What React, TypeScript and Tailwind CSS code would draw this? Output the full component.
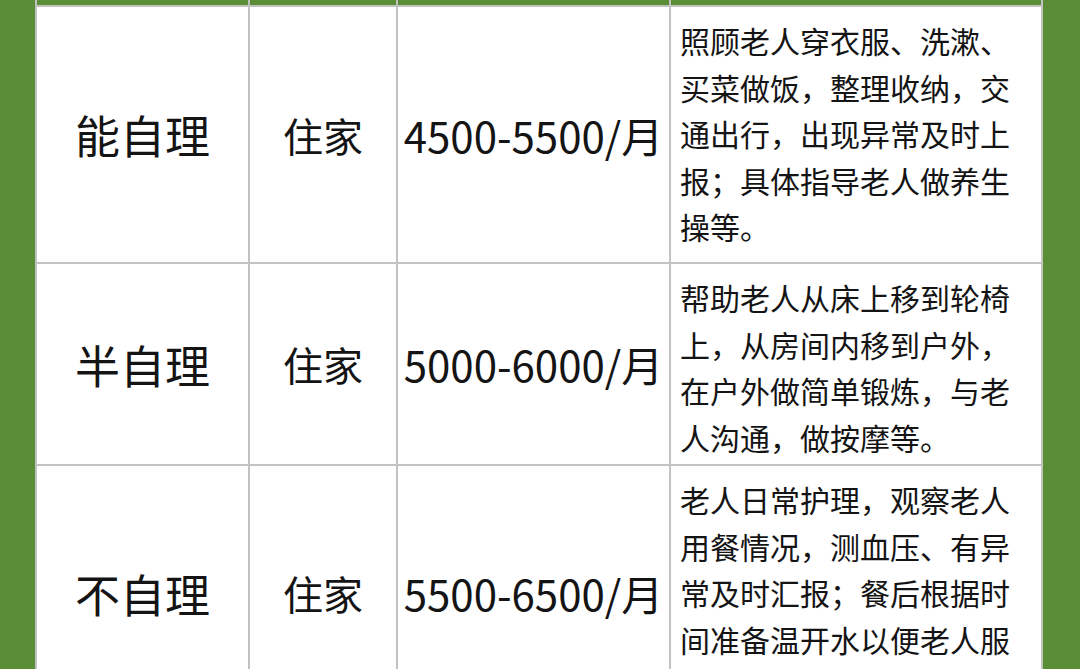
const rows = [
  {
    level: "能自理",
    place: "住家",
    price: "4500-5500/月",
    h: "h-[255px]",
    lines: [
      "照顾老人穿衣服、洗漱、",
      "买菜做饭，整理收纳，交",
      "通出行，出现异常及时上",
      "报；具体指导老人做养生",
      "操等。",
    ],
  },
  {
    level: "半自理",
    place: "住家",
    price: "5000-6000/月",
    h: "h-[200px]",
    lines: [
      "帮助老人从床上移到轮椅",
      "上，从房间内移到户外，",
      "在户外做简单锻炼，与老",
      "人沟通，做按摩等。",
    ],
  },
  {
    level: "不自理",
    place: "住家",
    price: "5500-6500/月",
    h: "h-[254px]",
    lines: [
      "老人日常护理，观察老人",
      "用餐情况，测血压、有异",
      "常及时汇报；餐后根据时",
      "间准备温开水以便老人服",
      "药。",
    ],
  },
];

export default function App() {
  return (
    <div
      className="w-[1080px] h-[669px] overflow-hidden bg-[#5b8d36] pl-[35px] pr-[37px] text-[#141414]"
      style={{ fontFamily: '"Noto Sans CJK SC", "Noto Sans", sans-serif' }}
    >
      <div className="grid grid-cols-[211px_146px_271px_370px] gap-[2px] bg-[#c2c2c2] px-[2px]">
        <div className="h-[5px] bg-[#5b8d36]" />
        <div className="h-[5px] bg-[#5b8d36]" />
        <div className="h-[5px] bg-[#5b8d36]" />
        <div className="h-[5px] bg-[#5b8d36]" />
        {rows.map((r) => (
          <>
            <div key={r.level + "a"} className={`${r.h} bg-white flex items-center justify-center text-[45px] leading-none`}>
              {r.level}
            </div>
            <div key={r.level + "b"} className={`${r.h} bg-white flex items-center justify-center text-[40px] leading-none`}>
              {r.place}
            </div>
            <div key={r.level + "c"} className={`${r.h} bg-white flex items-center justify-center text-[42px] leading-none`}>
              {r.price}
            </div>
            <div key={r.level + "d"} className={`${r.h} bg-white pl-[9px] pt-[10px] text-[30px] leading-[46.5px]`}>
              {r.lines.map((l) => (
                <div key={l} className="whitespace-nowrap">
                  {l}
                </div>
              ))}
            </div>
          </>
        ))}
      </div>
    </div>
  );
}
